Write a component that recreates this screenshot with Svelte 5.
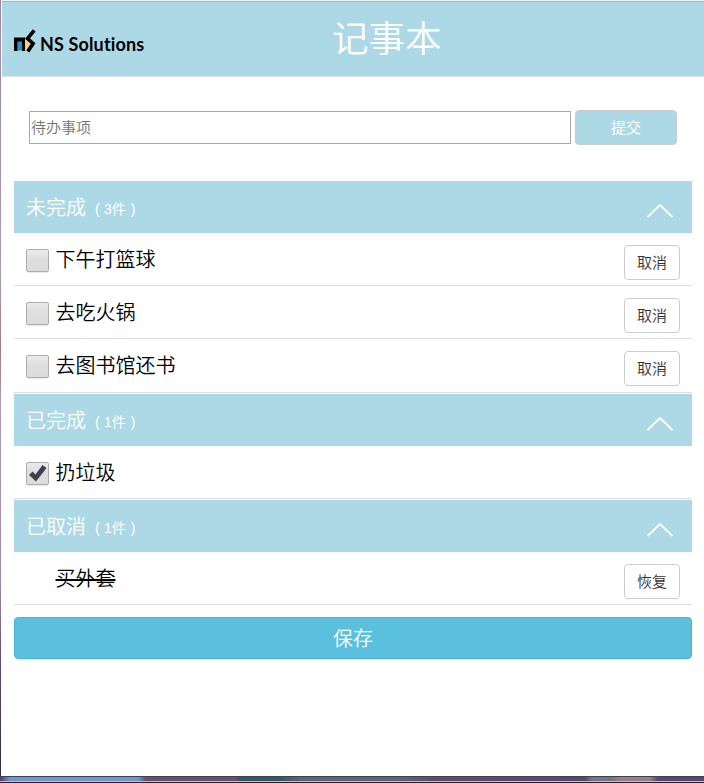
<script>
  const groups = [
    { title: '未完成', count: 3, items: [
      { text: '下午打篮球', action: '取消' },
      { text: '去吃火锅', action: '取消' },
      { text: '去图书馆还书', action: '取消' }
    ] },
    { title: '已完成', count: 1, items: [{ text: '扔垃圾', done: true }] },
    { title: '已取消', count: 1, items: [{ text: '买外套', cancelled: true, action: '恢复' }] }
  ];
</script>

<div class="window">
  <div class="page">
    <header>
      <div class="logo">
        <svg class="mark" width="22" height="25" viewBox="0 0 22 25">
          <path d="M3.500 12h4.500v9.500H3.500z" fill="#2a93bd" />
          <path d="M11.500 8.500l6 5.500-6 8z" fill="#f8cf88" />
          <path d="M0 8.500h11V22H8v-9.500H3.500V22H0z" fill="#000" />
          <path d="M20.200 1.300L13.500 9.500l5.600 5-5.300 8" fill="none" stroke="#000" stroke-width="3.600" />
        </svg>
        <span>NS Solutions</span>
      </div>
      <h1>记事本</h1>
    </header>

    <form class="entry" onsubmit={(e) => e.preventDefault()}>
      <input type="text" placeholder="待办事项" />
      <button class="submit">提交</button>
    </form>

    <main>
      {#each groups as group}
        <section>
          <h2>
            <span class="name">{group.title}</span>
            <span class="count"><i>(</i>{group.count}件<i class="close">)</i></span>
            <svg class="chevron" width="28" height="16" viewBox="0 0 28 16">
              <path d="M1.500 14L14 2l12.500 12" fill="none" stroke="#fff" stroke-width="1.800" />
            </svg>
          </h2>
          {#each group.items as item}
            <div class="row">
              <span class="check" class:hidden={item.cancelled}>
                {#if item.done}
                  <svg width="21" height="21" viewBox="0 0 21 21">
                    <path d="M2 12l3.500-3.500 3 3L15.500 2l4 3L9 18.500z" fill="#3f3f4e" />
                  </svg>
                {/if}
              </span>
              <span class="text" class:struck={item.cancelled}>{item.text}</span>
              {#if item.action}<button class="action">{item.action}</button>{/if}
            </div>
          {/each}
        </section>
      {/each}
      <button class="save">保存</button>
    </main>
  </div>
  <div class="desktop"></div>
</div>

<style>
  :global(body) { margin: 0; overflow: hidden; }
  * { box-sizing: border-box; }
  button, input { font-family: inherit; font-weight: 350; margin: 0; }
  .window {
    width: 704px;
    height: 783px;
    display: flex;
    flex-direction: column;
    font-family: "Liberation Sans", "Noto Sans CJK SC", sans-serif;
    background: #fff;
  }
  .page {
    height: 776px;
    border-left: 1px solid;
    border-image: linear-gradient(#9d849e, #aa9cb5 35%, #a87a7d 45%, #ae9cb8 52%, #9d8aa8 75%, #605070 85%, #33283f) 1;
    padding-left: 1px;
  }
  header {
    height: 77px;
    border-top: 2px solid #b3b7ba;
    border-bottom: 1px solid #e0e0e0;
    background: #add8e6;
    display: flex;
    border-image: linear-gradient(#eff3f3 1px, #b0b3b5 1px, #b0b3b5 2px, #dfe1e2 2px) 2 0 1 0;
  }
  .logo {
    width: 330px;
    padding: 27px 0 0 12px;
    display: flex;
    gap: 4px;
    flex: none;
  }
  .mark { flex: none; }
  .logo span {
    font: bold 18px/31px Lato, sans-serif;
    font-variant-ligatures: none;
    letter-spacing: 0.14px;
    color: #000;
    white-space: nowrap;
  }
  h1 {
    margin: 0;
    font-size: 36.500px;
    line-height: 75px;
    font-weight: 350;
    color: #fff;
  }
  .entry {
    display: flex;
    gap: 4px;
    padding: 33px 27px 36px 27px;
    align-items: center;
  }
  input {
    width: 542px;
    height: 33px;
    border: 1px solid #a9a9a9;
    border-radius: 0;
    padding: 0 1px;
    font-size: 15px;
    background: #fff;
  }
  input::placeholder { color: #757575; }
  .submit {
    width: 102px;
    height: 35px;
    border: 1px solid #ccc;
    border-radius: 4px;
    background: #add8e6;
    color: #fff;
    font-size: 15px;
    font-weight: 400;
    padding: 0 0 2px;
  }
  main { padding: 0 12px; }
  section { margin-bottom: 1px; }
  h2 {
    height: 52px;
    margin: 0;
    padding: 0 18px 0 12px;
    background: #add8e6;
    color: #fff;
    display: flex;
    align-items: flex-start;
    font-weight: 350;
  }
  .name { font-size: 20px; line-height: 54px; }
  .count { font-size: 14px; line-height: 57px; margin-left: 9px; display: flex; font-weight: 400; }
  .count i { font-style: normal; width: 9px; }
  .count .close { padding-left: 5px; }
  .chevron { margin-left: auto; margin-top: 22px; }
  .row {
    height: 53px;
    border-bottom: 1px solid #ddd;
    padding: 0 12px;
    display: flex;
    align-items: flex-start;
  }
  section:first-child .row:last-child { height: 54px; }
  .check {
    width: 23px;
    height: 23px;
    margin: 16px 6.500px 0 0;
    border: 1px solid #adadad;
    border-radius: 2px;
    background: linear-gradient(#ebebeb, #dedede 45%, #dcdcdc);
    box-shadow: 0 1px 1px #e8e8e8;
    display: flex;
  }
  .check.hidden { visibility: hidden; }
  .text {
    font-size: 20px;
    line-height: 54px;
    font-weight: 350;
    color: #000;
    flex: 1;
  }
  .struck { text-decoration: line-through; }
  .action {
    width: 56px;
    height: 35px;
    margin-top: 12px;
    padding: 0 0 2px;
    border: 1px solid #ccc;
    border-radius: 4px;
    background: #fff;
    color: #333;
    font-size: 15px;
  }
  .save {
    display: block;
    width: 100%;
    height: 42px;
    margin-top: 12px;
    border: 1px solid #46b8da;
    border-radius: 4px;
    background: #5bc0de;
    color: #fff;
    font-size: 20px;
    padding: 0 0 2px;
  }
  .desktop {
    height: 7px;
    border-top: 1px solid #3d424c;
    background:
      linear-gradient(transparent 4px, #c4bfd0 4px, #c4bfd0 5px, #23212f 5px),
      linear-gradient(90deg, #4e3c60, #7196cf 10px, #7196cf 138px, #655070 146px, #655070 235px, #345565 240px, #345565 280px, #56677a 300px, #5b6675 400px, #5b4c70 435px, #554873 585px, #74768a 592px, #75728a 610px, #92808f 620px, #92808f 650px, #554873 658px);
  }
</style>
